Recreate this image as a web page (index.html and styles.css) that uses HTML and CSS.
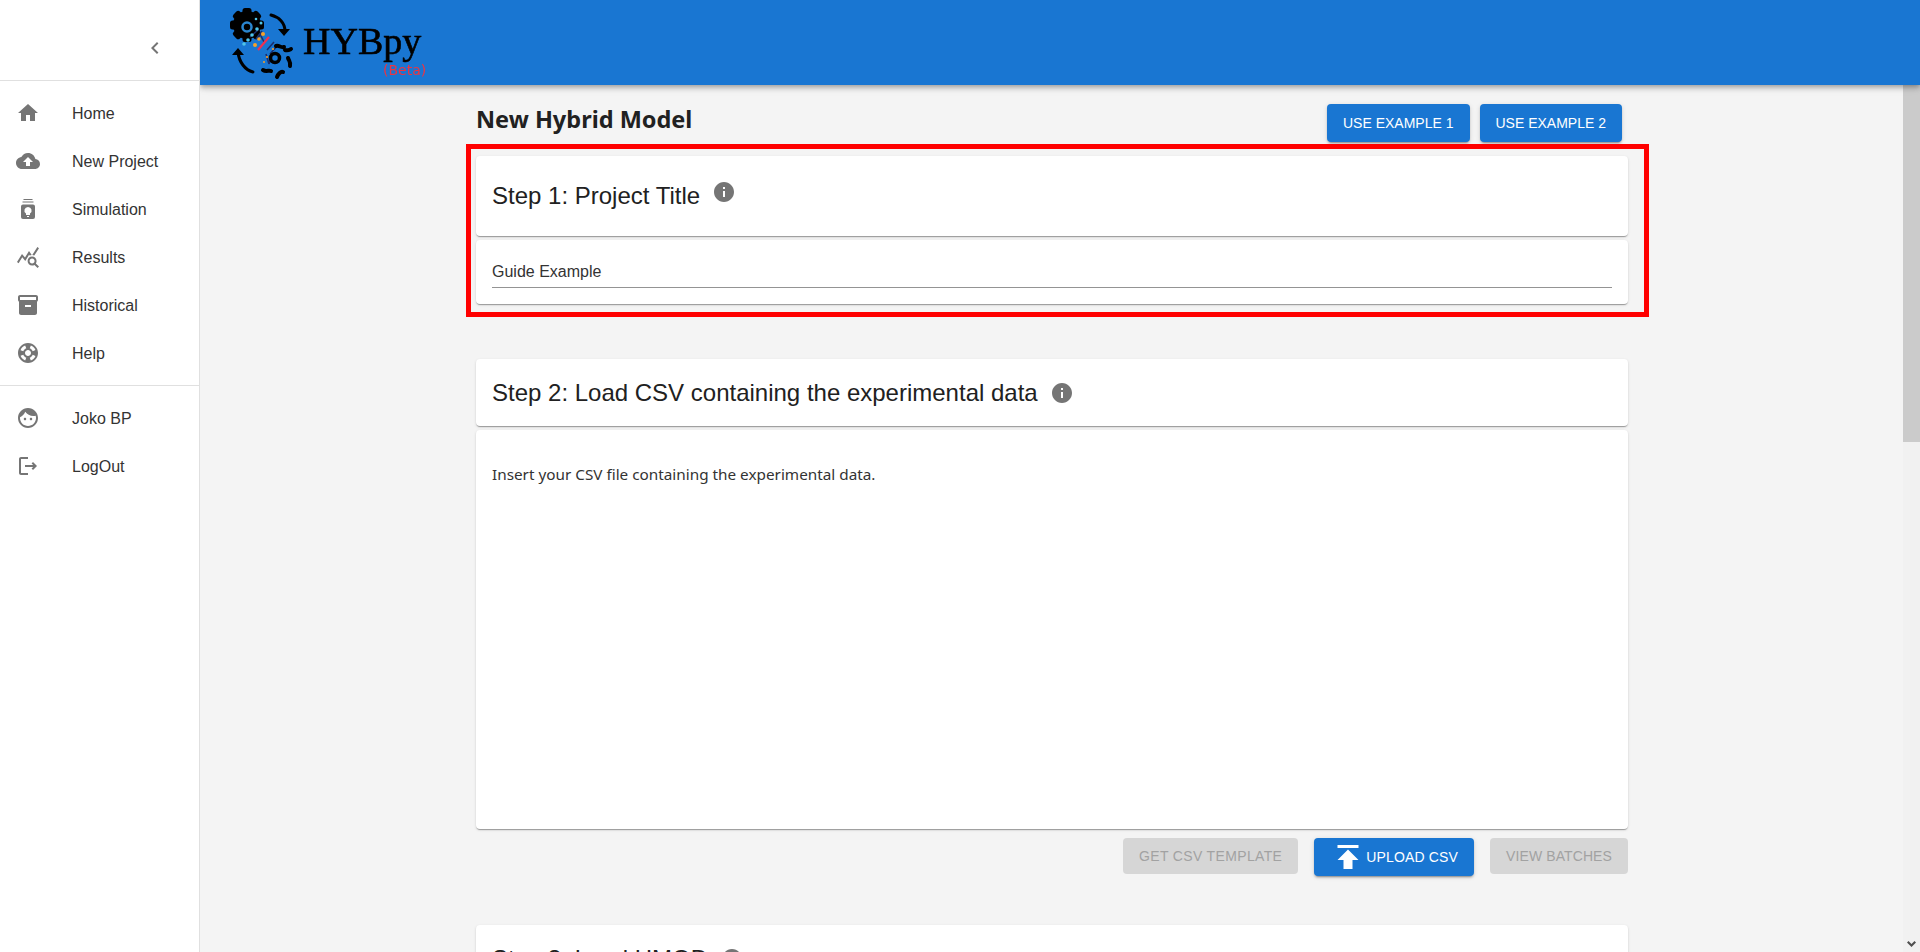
FILE: index.html
```html
<!DOCTYPE html>
<html lang="en">
<head>
  <meta charset="UTF-8">
  <title>HYBpy - New Hybrid Model</title>
  <link rel="stylesheet" href="styles.css">
</head>
<body>
  <header class="appbar">
    <div class="brand">
      <svg class="brand-logo" width="70" height="76" viewBox="0 0 70 76">
        <!-- big gear -->
        <g fill="#000">
          <circle cx="19" cy="21" r="14"/>
          <rect x="14.500" y="4" width="9" height="34" rx="2.500"/>
          <rect x="14.500" y="4" width="9" height="34" rx="2.500" transform="rotate(45 19 21)"/>
          <rect x="14.500" y="4" width="9" height="34" rx="2.500" transform="rotate(90 19 21)"/>
          <rect x="14.500" y="4" width="9" height="34" rx="2.500" transform="rotate(135 19 21)"/>
        </g>
        <circle cx="19" cy="23" r="4.500" fill="none" stroke="#2a86d0" stroke-width="2.500"/>
        <!-- circuit lines -->
        <path d="M22 33 30 26M28 35l6-8M36 38l-4-8M39 46l7-8M42 50l8-9M38 50l3 10M43 53l-2 7" fill="none" stroke="#1a2f6e" stroke-width="1.600"/>
        <g fill="#4fc3e8">
          <circle cx="29" cy="25" r="1.800"/>
          <circle cx="33" cy="19" r="1.500"/>
          <circle cx="24" cy="31" r="1.800"/>
          <circle cx="20" cy="36" r="1.800"/>
          <circle cx="16" cy="40" r="1.800"/>
          <circle cx="28" cy="15" r="1.300"/>
        </g>
        <g fill="#f5a12a">
          <circle cx="35" cy="30" r="2"/>
          <circle cx="31" cy="35" r="1.800"/>
          <circle cx="27" cy="41" r="2"/>
          <circle cx="50" cy="41" r="1.100"/>
          <circle cx="45" cy="45" r="1.100"/>
          <circle cx="39" cy="53" r="1.100"/>
          <circle cx="36" cy="58" r="1"/>
        </g>
        <path d="M30 46 41 33" stroke="#f2304f" stroke-width="2.200"/>
        <!-- small gear -->
        <circle cx="47" cy="54" r="4.500" fill="none" stroke="#000" stroke-width="3.500"/>
        <path d="M48 42c3-1 5 2 8 1M57 46c3 1 4 0 6-1M60 54c1 3 3 4 2 8M55 68c-2-1-5 2-6 5M43 67c-2-1-5 1-8-1" fill="none" stroke="#000" stroke-width="4" stroke-linecap="round"/>
        <!-- arrows -->
        <path d="M43 11c8 2 14 8 14 16" fill="none" stroke="#000" stroke-width="3" stroke-linecap="round"/>
        <path d="M50 25h12l-6 7z" fill="#000"/>
        <path d="M25 68c-8-2-14-10-15-20" fill="none" stroke="#000" stroke-width="3" stroke-linecap="round"/>
        <path d="M4 51l6-7 6 7z" fill="#000"/>
      </svg>
      <span class="brand-name">HYBpy</span>
      <span class="brand-beta">(Beta)</span>
    </div>
  </header>

  <nav class="drawer">
    <div class="drawer-top">
      <svg class="chevron" viewBox="0 0 24 24"><path d="M15.410 7.410 14 6l-6 6 6 6 1.410-1.410L10.830 12z"/></svg>
    </div>
    <ul class="menu">
      <li class="menu-item">
        <svg class="icon" viewBox="0 0 24 24"><path d="M10 20v-6h4v6h5v-8h3L12 3 2 12h3v8z"/></svg>
        <span>Home</span>
      </li>
      <li class="menu-item">
        <svg class="icon" viewBox="0 0 24 24"><path d="M19.350 10.040C18.670 6.590 15.640 4 12 4 9.110 4 6.600 5.640 5.350 8.040 2.340 8.360 0 10.910 0 14c0 3.310 2.690 6 6 6h13c2.760 0 5-2.240 5-5 0-2.640-2.050-4.780-4.650-4.960zM14 13v4h-4v-4H7l5-5 5 5h-3z"/></svg>
        <span>New Project</span>
      </li>
      <li class="menu-item">
        <svg class="icon" viewBox="0 0 24 24"><path fill-rule="evenodd" d="M7.500 2h9v1h-9zM6.500 4.500h11v1h-11zM7 7.500h10a2 2 0 0 1 2 2V20a2 2 0 0 1-2 2H7a2 2 0 0 1-2-2V9.500a2 2 0 0 1 2-2zM12 10a3.600 3.600 0 0 0-2 6.600V18h4v-1.400A3.600 3.600 0 0 0 12 10zM11 19v1h2v-1z"/></svg>
        <span>Simulation</span>
      </li>
      <li class="menu-item">
        <svg class="icon" viewBox="0 0 24 24"><path d="M19.880 18.470c.44-.7.7-1.510.7-2.390 0-2.490-2.010-4.500-4.500-4.500s-4.500 2.010-4.500 4.500 2.010 4.500 4.490 4.500c.88 0 1.700-.26 2.390-.7L21.580 23 23 21.580l-3.120-3.110zm-3.800.11c-1.380 0-2.500-1.120-2.500-2.500s1.120-2.500 2.500-2.500 2.500 1.120 2.500 2.500-1.120 2.500-2.500 2.500zm-.36-8.500c-.74.02-1.450.18-2.100.45l-.55-.83-3.800 6.180-3.010-3.520-3.630 5.810L1 17l5-8 3 3.500L13 6l2.720 4.080zm2.590.5c-.64-.28-1.330-.45-2.050-.49L21.380 2 23 3.180l-4.690 7.400z"/></svg>
        <span>Results</span>
      </li>
      <li class="menu-item">
        <svg class="icon" viewBox="0 0 24 24"><path d="M20 2H4c-1 0-2 .9-2 2v3.010c0 .72.43 1.340 1 1.690V20c0 1.100 1.100 2 2 2h14c.9 0 2-.9 2-2V8.700c.57-.35 1-.97 1-1.690V4c0-1.100-1-2-2-2zm-5 12H9v-2h6v2zm5-7H4V4l16-.02V7z"/></svg>
        <span>Historical</span>
      </li>
      <li class="menu-item">
        <svg class="icon" viewBox="0 0 24 24"><path d="M12 2C6.480 2 2 6.480 2 12s4.480 10 10 10 10-4.480 10-10S17.520 2 12 2zm7.460 7.120-2.780 1.150c-.51-1.360-1.580-2.440-2.950-2.940l1.150-2.780c2.100.8 3.770 2.470 4.580 4.570zM12 15c-1.660 0-3-1.340-3-3s1.340-3 3-3 3 1.340 3 3-1.340 3-3 3zM9.130 4.540l1.170 2.780c-1.380.5-2.470 1.590-2.980 2.970L4.540 9.130c.81-2.110 2.480-3.780 4.590-4.590zM4.540 14.870l2.780-1.150c.51 1.380 1.590 2.460 2.970 2.960l-1.170 2.780c-2.100-.81-3.770-2.480-4.580-4.590zm10.340 4.590-1.150-2.780c1.370-.51 2.450-1.590 2.950-2.970l2.780 1.170c-.81 2.100-2.480 3.770-4.580 4.580z"/></svg>
        <span>Help</span>
      </li>
    </ul>
    <ul class="menu menu-bottom">
      <li class="menu-item">
        <svg class="icon" viewBox="0 0 24 24"><path d="M9 11.750c-.69 0-1.250.56-1.250 1.250s.56 1.250 1.250 1.250 1.250-.56 1.250-1.250-.56-1.250-1.250-1.250zm6 0c-.69 0-1.250.56-1.250 1.250s.56 1.250 1.250 1.250 1.250-.56 1.250-1.250-.56-1.250-1.250-1.250zM12 2C6.480 2 2 6.480 2 12s4.480 10 10 10 10-4.480 10-10S17.520 2 12 2zm0 18c-4.410 0-8-3.590-8-8 0-.29.02-.58.05-.86 2.360-1.050 4.230-2.980 5.210-5.370C11.070 8.330 14.050 10 17.420 10c.78 0 1.530-.09 2.250-.26.21.71.33 1.470.33 2.260 0 4.410-3.590 8-8 8z"/></svg>
        <span>Joko BP</span>
      </li>
      <li class="menu-item">
        <svg class="icon" viewBox="0 0 24 24"><path d="M17 8l-1.410 1.410L17.170 11H9v2h8.170l-1.580 1.580L17 16l4-4-4-4zM5 5h7V3H5c-1.100 0-2 .9-2 2v14c0 1.100.9 2 2 2h7v-2H5V5z"/></svg>
        <span>LogOut</span>
      </li>
    </ul>
  </nav>

  <main class="content">
    <div class="page-head">
      <h1 class="page-title">New Hybrid Model</h1>
      <div class="page-actions">
        <button class="btn btn-example">Use Example 1</button>
        <button class="btn btn-example">Use Example 2</button>
      </div>
    </div>

    <section class="step step-one">
      <div class="card step-title step-title-tall">
        <h2>Step 1: Project Title</h2>
        <svg class="icon info-raised" viewBox="0 0 24 24"><path d="M12 2C6.480 2 2 6.480 2 12s4.480 10 10 10 10-4.480 10-10S17.520 2 12 2zm1 15h-2v-6h2v6zm0-8h-2V7h2v2z"/></svg>
      </div>
      <div class="card title-field">
        <div class="field-value">Guide Example</div>
      </div>
    </section>

    <section class="step step-two">
      <div class="card step-title">
        <h2>Step 2: Load CSV containing the experimental data</h2>
        <svg class="icon" viewBox="0 0 24 24"><path d="M12 2C6.480 2 2 6.480 2 12s4.480 10 10 10 10-4.480 10-10S17.520 2 12 2zm1 15h-2v-6h2v6zm0-8h-2V7h2v2z"/></svg>
      </div>
      <div class="card upload-body">
        <p>Insert your CSV file containing the experimental data.</p>
      </div>
      <div class="step-actions">
        <button class="btn" disabled>Get CSV Template</button>
        <button class="btn btn-upload">
          <svg class="upload-icon" viewBox="0 0 24 24"><path d="M5 4v2h14V4H5zm0 10h4v6h6v-6h4l-7-7-7 7z"/></svg>
          Upload CSV
        </button>
        <button class="btn btn-batches" disabled>View Batches</button>
      </div>
    </section>

    <section class="step step-three">
      <div class="card step-title">
        <h2>Step 3: Load HMOD</h2>
        <svg class="icon" viewBox="0 0 24 24"><path d="M12 2C6.480 2 2 6.480 2 12s4.480 10 10 10 10-4.480 10-10S17.520 2 12 2zm1 15h-2v-6h2v6zm0-8h-2V7h2v2z"/></svg>
      </div>
    </section>
  </main>

  <div class="scrollbar">
    <div class="scrollbar-thumb"></div>
    <svg class="scrollbar-arrow" width="9" height="6" viewBox="0 0 9 6"><path d="M0 1.500 1.500 0 4.500 3 7.500 0 9 1.500 4.500 6z"/></svg>
  </div>
</body>
</html>
```

FILE: styles.css
```css
body {
  margin: 0;
  background: #f4f4f4;
  font-family: "Liberation Sans", Arial, sans-serif;
  color: #212121;
}

/* top bar */
.appbar {
  position: fixed;
  top: 0;
  left: 200px;
  right: 0;
  height: 85px;
  background: #1976d2;
  box-shadow: 0 2px 4px -1px rgba(0,0,0,.2), 0 4px 5px 0 rgba(0,0,0,.14), 0 1px 10px 0 rgba(0,0,0,.12);
  z-index: 2;
}

.brand {
  position: relative;
  display: flex;
  align-items: flex-start;
  height: 85px;
  padding-left: 28px;
}

.brand-logo {
  margin-top: 4px;
  flex: none;
}

.brand-name {
  margin: 19px 0 0 5px;
  font-family: "Liberation Serif", "Times New Roman", serif;
  font-size: 38px;
  line-height: 44px;
  color: #000;
  -webkit-text-stroke: .6px #000;
}

.brand-beta {
  position: absolute;
  left: 183px;
  top: 60px;
  font-family: "DejaVu Sans", sans-serif;
  font-size: 14px;
  line-height: 20px;
  color: #ef3340;
}

/* side menu */
.drawer {
  position: fixed;
  top: 0;
  left: 0;
  bottom: 0;
  width: 199px;
  background: #fff;
  border-right: 1px solid #e0e0e0;
  z-index: 3;
}

.drawer-top {
  display: flex;
  justify-content: flex-end;
  align-items: center;
  height: 64px;
  padding: 16px 32px 0 0;
  border-bottom: 1px solid #e0e0e0;
}

.chevron {
  width: 24px;
  height: 24px;
  fill: #757575;
}

.menu {
  list-style: none;
  margin: 0;
  padding: 8px 0;
}

.menu-bottom {
  border-top: 1px solid #e0e0e0;
}

.menu-item {
  display: flex;
  align-items: center;
  height: 48px;
  padding-left: 16px;
  font-size: 16px;
  color: #333;
}

.menu-item span {
  padding-top: 2px;
}

.icon {
  flex: none;
  width: 24px;
  height: 24px;
  fill: #757575;
}

.menu-item .icon {
  margin-right: 32px;
}

/* page */
.content {
  width: 1152px;
  min-height: 1952px;
  margin-left: 476px;
  padding-top: 104px;
}

.page-head {
  display: flex;
  justify-content: space-between;
  align-items: flex-start;
  margin-bottom: 14px;
  padding-right: 6px;
}

.page-title {
  margin: 0;
  font-family: "Noto Sans", sans-serif;
  font-size: 23.500px;
  line-height: 30px;
  font-weight: 700;
  color: #212121;
}

.page-actions {
  display: flex;
  gap: 10px;
}

.btn {
  height: 36px;
  padding: 0 16px;
  border: 0;
  border-radius: 4px;
  background: #1976d2;
  font-family: "Liberation Sans", Arial, sans-serif;
  font-size: 14px;
  letter-spacing: .35px;
  text-transform: uppercase;
  color: #fff;
  box-shadow: 0 3px 1px -2px rgba(0,0,0,.2), 0 2px 2px 0 rgba(0,0,0,.14), 0 1px 5px 0 rgba(0,0,0,.12);
}

.btn-example {
  height: 38px;
  letter-spacing: 0;
}

.btn-batches {
  letter-spacing: .1px;
}

.btn:disabled {
  background: #d6d6d6;
  color: #a2a2a2;
  box-shadow: none;
}

.btn-upload {
  display: flex;
  align-items: center;
  height: 38px;
  letter-spacing: .15px;
}

.upload-icon {
  width: 36px;
  height: 36px;
  fill: #fff;
}

.card {
  background: #fff;
  border-radius: 4px;
  box-shadow: 0 2px 1px -1px rgba(0,0,0,.2), 0 1px 1px 0 rgba(0,0,0,.14), 0 1px 3px 0 rgba(0,0,0,.12);
}

.step-title {
  display: flex;
  align-items: center;
  gap: 12px;
  height: 67px;
  padding: 0 16px;
}

.step-title h2 {
  margin: 0;
  font-size: 24px;
  font-weight: 400;
  color: #212121;
}

.step-title-tall {
  height: 80px;
}

.info-raised {
  margin-top: -8px;
}

.step {
  position: relative;
}

/* red highlight round the first step */
.step-one::after {
  content: "";
  position: absolute;
  top: -12px;
  left: -10px;
  right: -21px;
  bottom: -13px;
  border: 5px solid #f00;
  pointer-events: none;
}

.title-field {
  height: 64px;
  margin-top: 4px;
  padding: 0 16px;
  box-sizing: border-box;
}

.field-value {
  height: 48px;
  box-sizing: border-box;
  padding-top: 22px;
  border-bottom: 1px solid #949494;
  font-size: 16px;
  line-height: 20px;
  color: #333;
}

.step-two {
  margin-top: 55px;
}

.upload-body {
  height: 399px;
  margin-top: 4px;
  padding: 34px 16px 0;
  box-sizing: border-box;
}

.upload-body p {
  margin: 0;
  font-family: "Noto Sans", sans-serif;
  font-size: 15.300px;
  line-height: 20px;
  color: #333;
}

.step-actions {
  display: flex;
  justify-content: flex-end;
  align-items: flex-start;
  gap: 16px;
  margin-top: 9px;
}

.step-three {
  margin-top: 49px;
}

/* page scrollbar, the top bar lies over it */
.scrollbar {
  position: fixed;
  top: 0;
  right: 0;
  bottom: 0;
  width: 17px;
  display: flex;
  flex-direction: column;
  justify-content: space-between;
  align-items: center;
  background: #f1f1f1;
  z-index: 1;
}

.scrollbar-thumb {
  width: 100%;
  height: 442px;
  background: #cbcbcb;
}

.scrollbar-arrow {
  margin-bottom: 5px;
  fill: #505050;
}
```
